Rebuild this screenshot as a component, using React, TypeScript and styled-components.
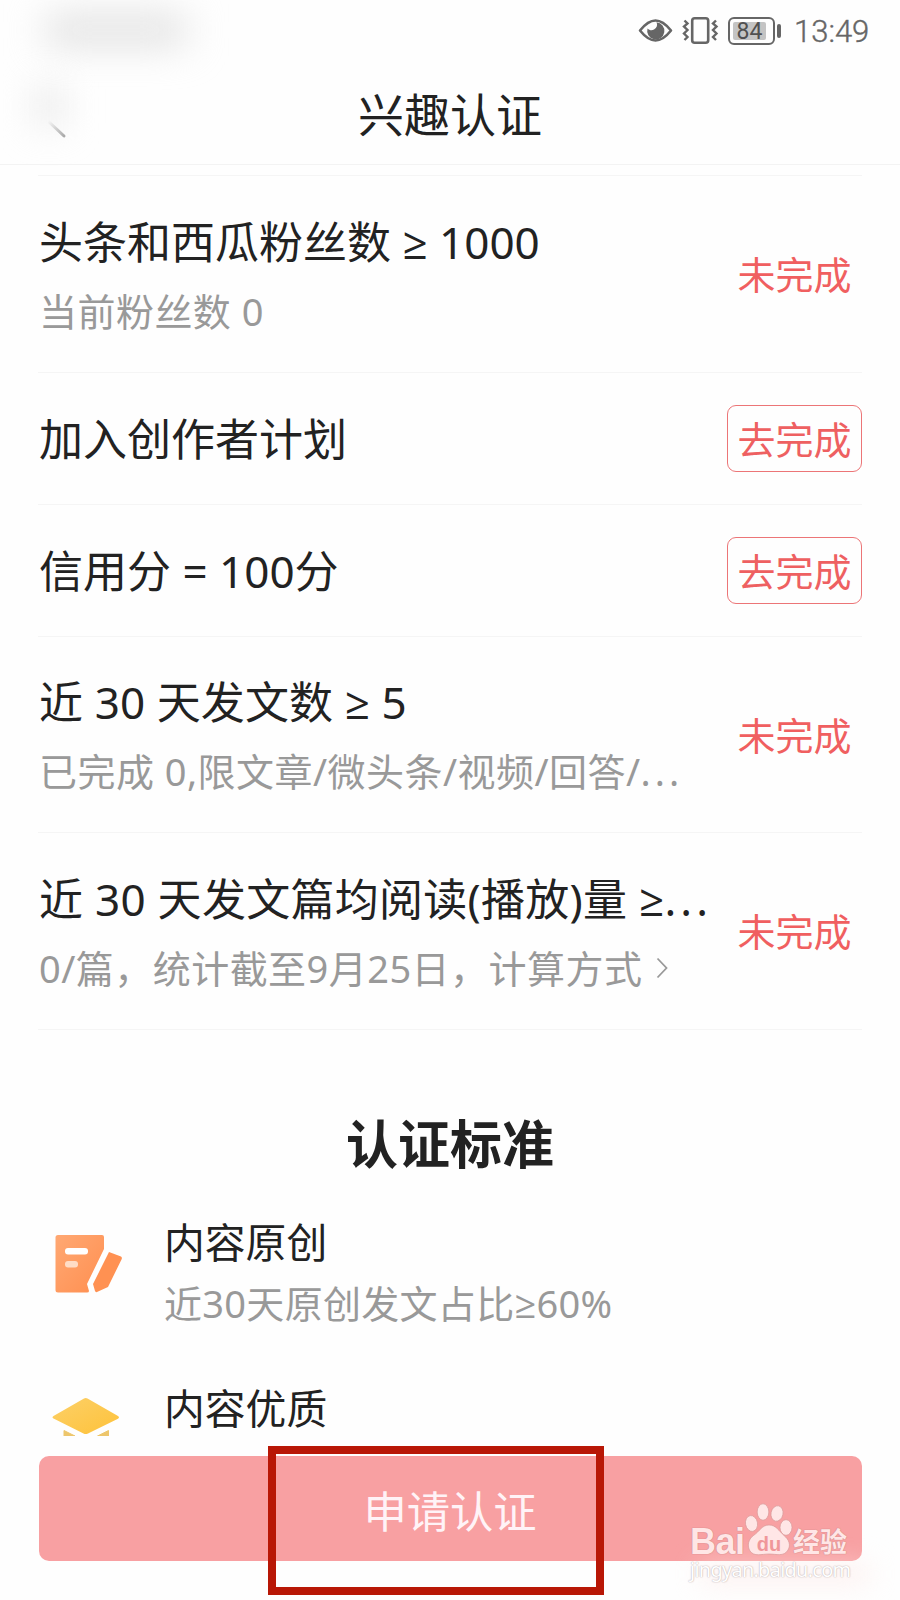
import React from "react";
import styled, { createGlobalStyle } from "styled-components";

const GlobalStyle = createGlobalStyle`
  *, *::before, *::after { box-sizing: border-box; }
  body { margin: 0; background: #fefefe; }
`;

const Page = styled.div`
  position: relative;
  width: 900px;
  height: 1600px;
  overflow: hidden;
  display: flex;
  flex-direction: column;
  background: #fefefe;
  color: #222;
  font-family: "Noto Sans", "Noto Sans CJK SC", sans-serif;
`;

const Smudge = styled.div<{ $x: number; $y: number; $w: number; $h: number; $tone: string; $blur: number }>`
  position: absolute;
  left: ${(p) => p.$x}px;
  top: ${(p) => p.$y}px;
  width: ${(p) => p.$w}px;
  height: ${(p) => p.$h}px;
  background: ${(p) => p.$tone};
  filter: blur(${(p) => p.$blur}px);
`;

const StatusBar = styled.div`
  position: relative;
  display: flex;
  flex: none;
  align-items: center;
  justify-content: flex-end;
  height: 62px;
  padding-right: 30px;
  color: #666;
`;

const StatusIcons = styled.svg`
  display: block;
  width: 150px;
  height: 62px;
`;

const Battery = styled.div`
  display: flex;
  align-items: center;
  margin-right: 13px;
`;

const BatteryBody = styled.div`
  display: flex;
  width: 47px;
  height: 28px;
  padding: 3px;
  border: 2.5px solid #666;
  border-radius: 6px;
`;

const BatteryLevel = styled.div`
  display: flex;
  align-items: center;
  justify-content: center;
  width: 33px;
  padding-top: 1px;
  border-radius: 2px;
  background: #c4c4c4;
  color: #505050;
  font-family: Roboto, sans-serif;
  font-size: 23px;
  line-height: 18px;
`;

const BatteryTip = styled.div`
  width: 4px;
  height: 14px;
  margin-left: 2px;
  border-radius: 2px;
  background: #666;
`;

const Clock = styled.span`
  width: 76px;
  padding-top: 2px;
  font-family: Roboto, "Noto Sans", sans-serif;
  font-size: 31px;
  font-weight: 300;
  line-height: 40px;
  white-space: nowrap;
  -webkit-text-stroke: 0.4px #666;
`;

const Header = styled.header`
  position: relative;
  display: flex;
  flex: none;
  align-items: center;
  justify-content: center;
  height: 103px;
  border-bottom: 1px solid #f3f3f3;
`;

const HeaderTitle = styled.h1`
  margin: 2px 0 0;
  font-size: 46px;
  font-weight: 400;
  line-height: 60px;
`;

const BackIcon = styled.svg`
  position: absolute;
  left: 44px;
  top: 56px;
  width: 24px;
  height: 24px;
`;

const RequirementList = styled.section`
  display: flex;
  flex: none;
  flex-direction: column;
  margin: 10px 38px 0;
  border-top: 1px solid #f5f5f5;
`;

const RequirementText = styled.div`
  display: flex;
  flex-direction: column;
  padding: 4px 0 0 1px;
`;

const Requirement = styled.div<{ $tall?: boolean }>`
  display: flex;
  align-items: center;
  justify-content: space-between;
  height: ${(p) => (p.$tall ? 196.5 : 132)}px;
  border-bottom: 1px solid #f5f5f5;

  ${RequirementText} {
    padding-top: ${(p) => (p.$tall ? 6 : 3)}px;
  }
`;

const RequirementTitle = styled.div<{ $spacing?: number }>`
  font-size: 44px;
  line-height: 69px;
  letter-spacing: ${(p) => p.$spacing ?? 0}px;
  white-space: nowrap;
`;

const RequirementNote = styled.div`
  display: flex;
  align-items: center;
  color: #999;
  font-size: 38px;
  line-height: 69px;
  letter-spacing: 0.46px;
  white-space: nowrap;
`;

const AtLeast = styled.span`
  font-family: "Open Sans", Roboto, sans-serif;
`;

const Dots = styled.span`
  letter-spacing: 4px;
`;

const MoreIcon = styled.svg`
  width: 12px;
  height: 22px;
  margin-left: 14px;
`;

const StatusLabel = styled.div`
  flex: none;
  width: 135px;
  padding-top: 1px;
  color: #f05f60;
  font-size: 38px;
  line-height: 66px;
  text-align: center;
`;

const ActionButton = styled.button`
  flex: none;
  width: 135px;
  height: 67px;
  padding: 1px 0 0;
  border: 1.5px solid #ec7577;
  border-radius: 9px;
  background: transparent;
  color: #ee6061;
  font-family: inherit;
  font-size: 38px;
  line-height: 64px;
`;

const SectionTitle = styled.h2`
  flex: none;
  margin: 78px 0 0;
  font-size: 52px;
  font-weight: 700;
  line-height: 72px;
  text-align: center;
`;

const Standard = styled.div<{ $gap: number; $height?: number }>`
  display: flex;
  flex: none;
  height: ${(p) => p.$height ?? 124}px;
  margin-top: ${(p) => p.$gap}px;
  padding-left: 50px;
  overflow: hidden;
`;

const StandardIcon = styled.svg<{ $top: number }>`
  flex: none;
  width: 76px;
  height: 64px;
  margin: ${(p) => p.$top}px 38px 0 0;
`;

const StandardText = styled.div`
  display: flex;
  flex-direction: column;
`;

const StandardTitle = styled.div`
  font-size: 40.8px;
  line-height: 62px;
`;

const StandardNote = styled.div`
  color: #999;
  font-size: 38px;
  line-height: 60px;
  letter-spacing: 0.3px;
  white-space: nowrap;
`;

const ApplyButton = styled.button`
  display: block;
  flex: none;
  height: 105px;
  margin: 20.5px 38.5px 0;
  padding: 3px 0 0;
  border: 0;
  border-radius: 10px;
  background: #f8a0a2;
  color: #fff3f7;
  font-family: inherit;
  font-size: 43.3px;
  line-height: 102px;
`;

const ApplyLabel = styled.span`
  display: block;
  height: 102px;
  line-height: 106px;
`;

const Highlight = styled.div`
  position: absolute;
  left: 268px;
  top: 1446px;
  width: 336px;
  height: 149px;
  border: 8px solid #b81706;
`;

const Watermark = styled.div`
  position: absolute;
  left: 690px;
  top: 1502px;
  display: flex;
  flex-direction: column;
  width: 166px;
`;

const Brand = styled.div`
  display: flex;
  align-items: flex-end;
  height: 56px;
  color: #ffe6e6;
  font-family: "Liberation Sans", "Noto Sans CJK SC", sans-serif;
  font-weight: 700;
  text-shadow: 0 0 1px #c98585, 0 0 1px #c98585;
`;

const BrandLatin = styled.span`
  width: 55px;
  font-size: 36px;
  line-height: 32px;
  letter-spacing: -0.5px;
`;

const BrandHan = styled.span`
  font-family: "Noto Sans CJK SC", sans-serif;
  font-size: 27px;
  line-height: 35px;
  white-space: nowrap;
`;

const Paw = styled.svg`
  flex: none;
  width: 48px;
  height: 56px;
  text-shadow: none;
`;

const Site = styled.div`
  height: 24px;
  color: #fff;
  font-size: 20px;
  line-height: 24px;
  letter-spacing: -0.75px;
  text-shadow: 0 0 1px #b9a9a9, 0 0 2px #d8cccc;
`;

function OriginalIcon() {
  return (
    <StandardIcon $top={24} viewBox="50 1235 76 64">
      <defs>
        <linearGradient id="sheet" x1="0" y1="0" x2="1" y2="1">
          <stop offset="0" stopColor="#ffa873" />
          <stop offset="1" stopColor="#ff8f50" />
        </linearGradient>
      </defs>
      <path d="M58 1235H102Q104 1235 104 1237V1249L87 1284L89 1291Q89 1292.500 87 1292.500H58Q55.500 1292.500 55.500 1290V1237.500Q55.500 1235 58 1235Z" fill="url(#sheet)" />
      <path d="M109 1252L121 1256.500Q122.500 1257.500 121.500 1259.500L108 1287L97 1292Q95.500 1292.500 95 1291L93 1284Z" fill="#ff9152" />
      <rect x="65" y="1248" width="23" height="6.500" rx="3" fill="#fff" />
      <rect x="65" y="1261" width="13" height="6.500" rx="3" fill="#ffdcc6" />
    </StandardIcon>
  );
}

function QualityIcon() {
  return (
    <StandardIcon $top={19} viewBox="50 1396 76 64">
      <defs>
        <linearGradient id="cap" x1="0" y1="0" x2="1" y2="1">
          <stop offset="0" stopColor="#fcd068" />
          <stop offset="1" stopColor="#fec23a" />
        </linearGradient>
      </defs>
      <path d="M84 1398.500Q85.700 1397.500 87.500 1398.500L118 1416Q120 1417.300 118 1418.700L88 1433.500Q85.700 1434.700 83.500 1433.500L53.500 1418.500Q51.500 1417.300 53.500 1416Z" fill="url(#cap)" />
      <path d="M64 1430.500L75 1436H64Z M108.500 1430.500V1436H97.500Z" fill="#edc66c" stroke="#edc66c" strokeWidth="1" />
    </StandardIcon>
  );
}

export default function App() {
  return (
    <>
      <GlobalStyle />
      <Page>
        <Smudge $x={46} $y={16} $w={140} $h={28} $tone="#dedede" $blur={19} />
        <Smudge $x={36} $y={88} $w={26} $h={36} $tone="#e6e6e6" $blur={18} />
        <Smudge $x={700} $y={1568} $w={170} $h={12} $tone="#fde9e7" $blur={14} />
        <StatusBar>
          <StatusIcons viewBox="578 0 150 62" fill="none">
            <path d="M640 30.500C646 23 650.500 20.500 655.500 20.500S665 23 671 30.500C665 38 660.500 40.500 655.500 40.500S646 38 640 30.500Z" stroke="#666" strokeWidth="2.600" strokeLinejoin="round" />
            <path d="M656.500 22.300A8.600 8.600 0 1 1 647.500 28.500C649.500 30.500 652 30.800 654 29.500C657 27.800 657.800 25 656.500 22.300Z" fill="#666" />
            <rect x="692.200" y="18.200" width="16" height="24.600" rx="2.500" stroke="#666" strokeWidth="2.600" />
            <path d="M684.500 20.500L687.500 23.500L684 26.500L687.500 30L684 33.500L687.500 37L684.500 40" stroke="#666" strokeWidth="2.400" />
            <path d="M716 20.500L713 23.500L716.500 26.500L713 30L716.500 33.500L713 37L716 40" stroke="#666" strokeWidth="2.400" />
          </StatusIcons>
          <Battery>
            <BatteryBody>
              <BatteryLevel>84</BatteryLevel>
            </BatteryBody>
            <BatteryTip />
          </Battery>
          <Clock>13:49</Clock>
        </StatusBar>
        <Header>
          <BackIcon viewBox="0 0 24 24">
            <defs>
              <linearGradient id="back" x1="0" y1="0" x2="1" y2="1">
                <stop offset="0" stopColor="#aaa" stopOpacity="0" />
                <stop offset="1" stopColor="#aaa" />
              </linearGradient>
            </defs>
            <path d="M4 3L20 18" stroke="url(#back)" strokeWidth="3" strokeLinecap="round" />
          </BackIcon>
          <HeaderTitle>兴趣认证</HeaderTitle>
        </Header>

        <RequirementList>
          <Requirement $tall>
            <RequirementText>
              <RequirementTitle>
                头条和西瓜粉丝数 <AtLeast>≥</AtLeast> 1000
              </RequirementTitle>
              <RequirementNote>当前粉丝数 0</RequirementNote>
            </RequirementText>
            <StatusLabel>未完成</StatusLabel>
          </Requirement>
          <Requirement>
            <RequirementText>
              <RequirementTitle>加入创作者计划</RequirementTitle>
            </RequirementText>
            <ActionButton>去完成</ActionButton>
          </Requirement>
          <Requirement>
            <RequirementText>
              <RequirementTitle>信用分 = 100分</RequirementTitle>
            </RequirementText>
            <ActionButton>去完成</ActionButton>
          </Requirement>
          <Requirement $tall>
            <RequirementText>
              <RequirementTitle $spacing={0.1}>
                近 30 天发文数 <AtLeast>≥</AtLeast> 5
              </RequirementTitle>
              <RequirementNote>
                已完成 0,限文章/微头条/视频/回答/<Dots>...</Dots>
              </RequirementNote>
            </RequirementText>
            <StatusLabel>未完成</StatusLabel>
          </Requirement>
          <Requirement $tall>
            <RequirementText>
              <RequirementTitle $spacing={0.28}>
                近 30 天发文篇均阅读(播放)量 <AtLeast>≥</AtLeast>
                <Dots>...</Dots>
              </RequirementTitle>
              <RequirementNote>
                0/篇，统计截至9月25日，计算方式
                <MoreIcon viewBox="0 0 12 22" fill="none">
                  <path d="M1.500 1.500L10.500 11L1.500 20.500" stroke="#999" strokeWidth="1.800" />
                </MoreIcon>
              </RequirementNote>
            </RequirementText>
            <StatusLabel>未完成</StatusLabel>
          </Requirement>
        </RequirementList>

        <SectionTitle>认证标准</SectionTitle>
        <Standard $gap={31}>
          <OriginalIcon />
          <StandardText>
            <StandardTitle>内容原创</StandardTitle>
            <StandardNote>
              近30天原创发文占比<AtLeast>≥</AtLeast>60%
            </StandardNote>
          </StandardText>
        </Standard>
        <Standard $gap={42} $height={59}>
          <QualityIcon />
          <StandardText>
            <StandardTitle>内容优质</StandardTitle>
          </StandardText>
        </Standard>

        <ApplyButton>
          <ApplyLabel>申请认证</ApplyLabel>
        </ApplyButton>
        <Highlight />
        <Watermark>
          <Brand>
            <BrandLatin>Bai</BrandLatin>
            <Paw viewBox="745 1502 48 56">
              <g fill="#ffe6e6" stroke="#d99a9a" strokeWidth="0.700">
                <ellipse cx="751.500" cy="1523.500" rx="6" ry="8" transform="rotate(-10 751.500 1523.500)" />
                <ellipse cx="763" cy="1512" rx="5.800" ry="8.200" />
                <ellipse cx="777" cy="1513.500" rx="6" ry="7.800" transform="rotate(12 777 1513.500)" />
                <ellipse cx="786" cy="1527.500" rx="6" ry="7.800" />
                <path d="M769 1525C776 1525 779 1531 784 1535.500C789 1539.500 791 1545 788 1550C784 1557 776 1554 769 1554S754 1557 750 1551C747 1546 748 1539.500 753.500 1535.500C760 1531 762 1525 769 1525Z" />
              </g>
              <text x="769" y="1550.500" textAnchor="middle" fill="#f0979a" fontFamily="Liberation Sans, sans-serif" fontSize="20" fontWeight="700">
                du
              </text>
            </Paw>
            <BrandHan>经验</BrandHan>
          </Brand>
          <Site>jingyan.baidu.com</Site>
        </Watermark>
      </Page>
    </>
  );
}
